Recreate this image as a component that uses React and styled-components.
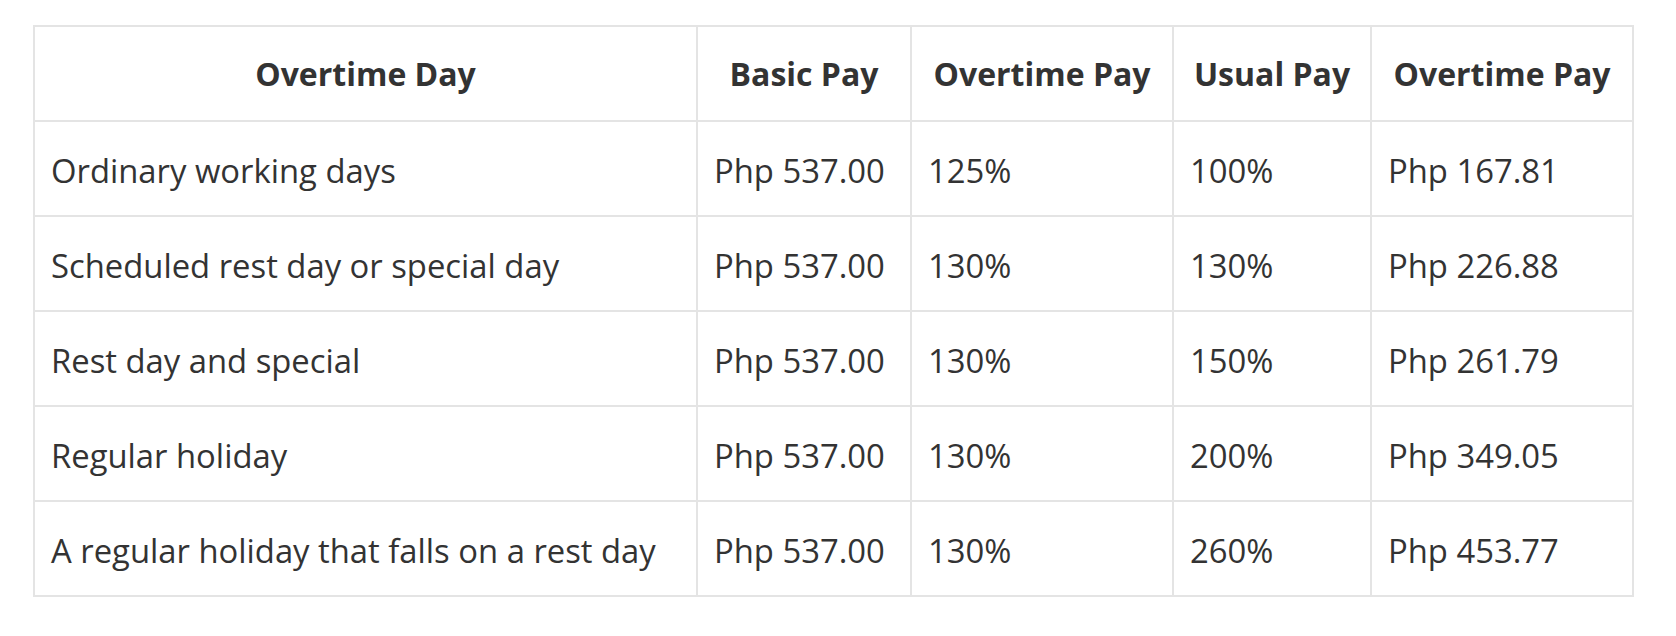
import React from "react";
import styled, { createGlobalStyle } from "styled-components";

const GlobalStyle = createGlobalStyle`
  html, body {
    margin: 0;
    padding: 0;
    background: #ffffff;
  }
  body {
    font-family: "Open Sans", Lato, "Noto Sans", sans-serif;
    color: #333333;
  }
`;

const Page = styled.div`
  padding: 25px 44px 39px 33px;
`;

const Table = styled.table`
  width: 1599px;
  border-collapse: collapse;
  table-layout: fixed;
  border: 2px solid #e4e4e4;
  color: #333333;
`;

const Col = styled.col`
  width: ${(p) => p.$w}px;
`;

const HeadCell = styled.th`
  border: 2px solid #e4e4e4;
  padding: 23px 16px 22px;
  font-size: 32px;
  line-height: 48px;
  font-weight: 700;
  text-align: center;
  white-space: nowrap;
`;

const Cell = styled.td`
  border: 2px solid #e4e4e4;
  padding: 25px 16px 20px;
  font-size: 32.8px;
  line-height: 48px;
  font-weight: 400;
  text-align: left;
  white-space: nowrap;
`;

const columns = [
  { label: "Overtime Day", w: 663 },
  { label: "Basic Pay", w: 214 },
  { label: "Overtime Pay", w: 262 },
  { label: "Usual Pay", w: 198 },
  { label: "Overtime Pay", w: 262 },
];

const rows = [
  ["Ordinary working days", "Php 537.00", "125%", "100%", "Php 167.81"],
  ["Scheduled rest day or special day", "Php 537.00", "130%", "130%", "Php 226.88"],
  ["Rest day and special", "Php 537.00", "130%", "150%", "Php 261.79"],
  ["Regular holiday", "Php 537.00", "130%", "200%", "Php 349.05"],
  ["A regular holiday that falls on a rest day", "Php 537.00", "130%", "260%", "Php 453.77"],
];

export default function App() {
  return (
    <>
      <GlobalStyle />
      <Page>
        <Table>
          <colgroup>
            {columns.map((c, i) => (
              <Col key={i} $w={c.w} />
            ))}
          </colgroup>
          <thead>
            <tr>
              {columns.map((c, i) => (
                <HeadCell key={i}>{c.label}</HeadCell>
              ))}
            </tr>
          </thead>
          <tbody>
            {rows.map((r, i) => (
              <tr key={i}>
                {r.map((v, j) => (
                  <Cell key={j}>{v}</Cell>
                ))}
              </tr>
            ))}
          </tbody>
        </Table>
      </Page>
    </>
  );
}
